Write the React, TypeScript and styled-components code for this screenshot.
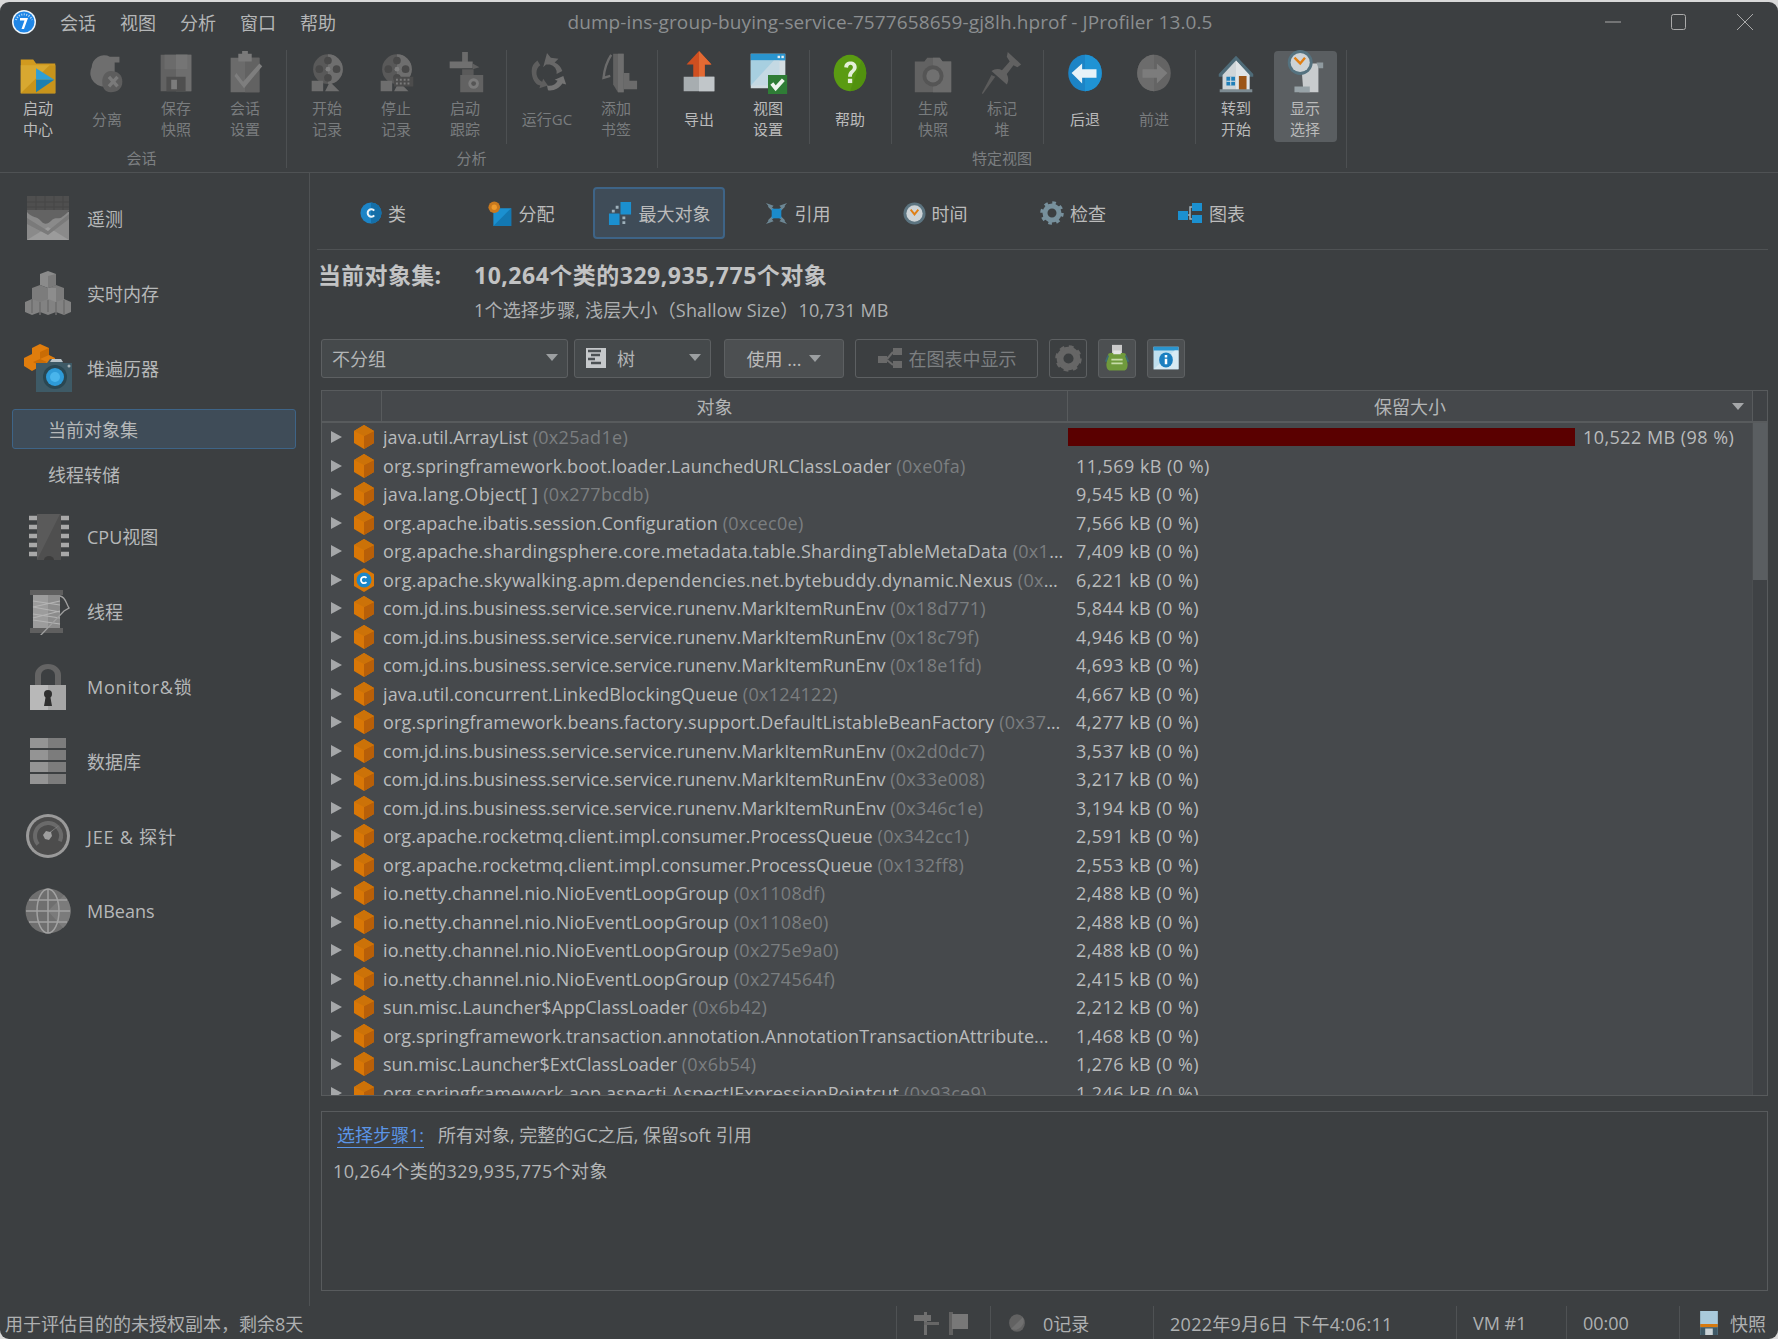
import React from "react";
import styled, { createGlobalStyle } from "styled-components";

const FONT = `"Open Sans", "Noto Sans CJK SC", sans-serif`;

const Global = createGlobalStyle`
  html, body { margin: 0; padding: 0; background: #d9d9d9; }
  body { font-family: ${FONT}; overflow: hidden; }
  * { box-sizing: border-box; }
`;

const Win = styled.div`
  width: 1778px; height: 1337px; margin-top: 2px; background: #3c3f41; color: #bbbbbb;
  border-radius: 9px; overflow: hidden; display: flex; flex-direction: column; font-size: 18px;
`;
const TitleBar = styled.div`
  height: 46px; flex: none; display: flex; align-items: center; padding: 0 0 6px 12px; position: relative;
`;
const Menu = styled.div`
  display: flex; gap: 24px; margin-left: 24px; color: #b4b6b7; font-size: 18px;
`;
const TitleText = styled.div`
  margin-left: 229px; color: #8b8e90; font-size: 19px; letter-spacing: .1px; white-space: nowrap; width: 650px; text-align: center;
`;
const WinBtns = styled.div`
  margin-left: auto; display: flex; width: 198px; height: 100%; align-items: center;
`;
const WinBtn = styled.div`
  width: 66px; display: flex; justify-content: center; align-items: center;
`;
const Ribbon = styled.div`
  height: 125px; flex: none; display: flex; padding: 2px 0 0 3.5px; border-bottom: 1px solid #4f5254;
`;
const RGroup = styled.div`
  display: flex; flex-direction: column;
`;
const RItems = styled.div`
  display: flex; height: 94px;
`;
const RLabel = styled.div`
  margin-top: 3px; height: 22px; line-height: 22px; text-align: center; font-size: 15px; color: #7c7f81;
`;
const RSep = styled.div<{ $h: number; $w?: number }>`
  width: ${p => p.$w ?? 13}px; flex: none; height: ${p => p.$h}px; display: flex; justify-content: center;
  &::before { content: ""; width: 1px; background: #4d5052; }
`;
const RItem = styled.div<{ $on?: boolean; $dim?: boolean }>`
  width: 69px; height: 94px; display: flex; flex-direction: column; align-items: center; position: relative;
  color: ${p => (p.$dim ? "#797c7e" : "#bbbbbb")};
  &::before {
    content: ""; display: ${p => (p.$on ? "block" : "none")}; position: absolute; left: 3px; right: 3px; top: 1px; bottom: 2px;
    background: #5a5e61; border-radius: 4px;
  }
`;
const RIcon = styled.div`
  height: 46px; display: flex; align-items: center; justify-content: center; flex: none; position: relative;
`;
const RText = styled.div`
  flex: 1; display: flex; flex-direction: column; justify-content: center; align-items: center; position: relative;
  font-size: 15px; line-height: 21px; padding-bottom: 2px; text-align: center;
`;
const Body = styled.div`
  flex: 1; display: flex; min-height: 0;
`;
const Side = styled.div`
  width: 310px; flex: none; border-right: 1px solid #4f5254; padding-top: 7.5px;
`;
const SideItem = styled.div<{ $ls?: number }>`
  height: 75px; display: flex; align-items: center; padding-left: 24px; gap: 15px; font-size: 18px; color: #b6b8b9;
  letter-spacing: ${p => p.$ls ?? 0}px;
`;
const SideSub = styled.div<{ $on?: boolean; $top?: number }>`
  height: 40px; margin: ${p => p.$top ?? 1.5}px 13px 4.5px 12px; padding-left: 35px; display: flex; align-items: center; border-radius: 3px;
  border: 1px solid ${p => (p.$on ? "#3e6487" : "transparent")};
  background: ${p => (p.$on ? "#3f4c58" : "transparent")};
  color: #b6b8b9;
`;
const Main = styled.div`
  flex: 1; min-width: 0; display: flex; flex-direction: column; padding: 0 10px 16px 11px;
`;
const Tabs = styled.div`
  display: flex; gap: 6px; padding: 14px 0 10px 0; border-bottom: 1px solid #4f5254; margin-left: -4px; height: 77px; flex: none;
`;
const Tab = styled.div<{ $on?: boolean }>`
  width: 132px; height: 52px; display: flex; align-items: center; justify-content: center; gap: 6px; border-radius: 4px; font-size: 18px;
  border: 2px solid ${p => (p.$on ? "#3e6487" : "transparent")};
  background: ${p => (p.$on ? "#3f4c58" : "transparent")};
`;
const Summary = styled.div`
  display: grid; grid-template-columns: 156px 1fr; margin-left: -3px; height: 89px; flex: none; align-content: start;
`;
const SumHead = styled.div<{ $ls?: number }>`
  font-size: 23px; font-weight: 700; color: #c2c3c4; line-height: 32px; padding-top: 9px; height: 43px; white-space: nowrap;
  letter-spacing: ${p => p.$ls ?? 0}px;
`;
const SumSub = styled.div`
  grid-column: 2; font-size: 18px; letter-spacing: .17px; color: #aeb0b1; line-height: 26px; padding-top: 4px; height: 30px;
`;
const Tools = styled.div`
  display: flex; height: 39px; flex: none; gap: 11px;
`;
const Combo = styled.div<{ $w: number; $mr: number }>`
  width: ${p => p.$w}px; height: 39px; margin-right: ${p => p.$mr}px; background: #45494b; border: 1px solid #5d6062; border-radius: 3px; display: flex; align-items: center; padding: 0 9px 2px 10px; gap: 10px;
  color: #b3b5b6;
`;
const Caret = styled.span<{ $ml?: string }>`
  margin-left: ${p => p.$ml ?? "auto"}; width: 0; height: 0; border-left: 6.5px solid transparent; border-right: 6.5px solid transparent; border-top: 7px solid #9c9fa1;
`;
const Btn = styled.div<{ $w: number; $off?: boolean }>`
  width: ${p => p.$w}px; height: 39px; flex: none; border: 1px solid #5d6062; border-radius: 3px; display: flex; align-items: center; justify-content: center; gap: 6px;
  background: ${p => (p.$off ? "transparent" : "#4c4f51")};
  color: ${p => (p.$off ? "#7c7f81" : "#bbbbbb")};
  padding-bottom: 1px;
`;
const TableBox = styled.div`
  margin-top: 12px; height: 706px; flex: none; border: 1px solid #585b5d; background: #46494c; display: flex; flex-direction: column; overflow: hidden; position: relative;
`;
const THead = styled.div`
  height: 32px; flex: none; display: flex; border-bottom: 2px solid #585b5d; background: #45484b;
`;
const Th = styled.div<{ $w?: number; $pr?: number }>`
  ${p => (p.$w ? `width:${p.$w}px;flex:none;` : "flex:1;")}
  padding-right: ${p => p.$pr ?? 0}px;
  border-right: 1px solid #585b5d; display: flex; align-items: center; justify-content: center; position: relative; color: #b3b5b6;
`;
const ThCorner = styled.div`
  flex: 1; background: #3f4245;
`;
const ThCaret = styled.span`
  position: absolute; right: 8px; top: 12px; width: 0; height: 0; border-left: 6.5px solid transparent; border-right: 6.5px solid transparent; border-top: 7px solid #a5a7a9;
`;
const TBody = styled.div`
  flex: 1; display: flex; min-height: 0; overflow: hidden;
`;
const Rows = styled.div`
  flex: 1; min-width: 0;
`;
const Row = styled.div`
  height: 28.5px; display: flex; align-items: center; padding-left: 9px;
`;
const Arrow = styled.span`
  width: 0; height: 0; flex: none; border-top: 6.5px solid transparent; border-bottom: 6.5px solid transparent; border-left: 11px solid #a5a7a9;
`;
const NameCell = styled.div`
  width: 720px; flex: none; padding: 0 3px 0 6px; margin-left: 5px; display: flex; align-items: center; gap: 8px; min-width: 0;
  svg { flex: none; }
`;
const NameText = styled.span<{ $ls: number }>`
  flex: 1; min-width: 0; white-space: nowrap; overflow: hidden; text-overflow: ellipsis; color: #b9bbbc; letter-spacing: ${p => p.$ls}px;
`;
const Hex = styled.span`
  color: #7b7e80; letter-spacing: .3px;
`;
const ValCell = styled.div`
  flex: 1; display: flex; align-items: center; color: #b9bbbc; padding-left: 1px; gap: 8px; white-space: nowrap; letter-spacing: .45px;
`;
const ValText = styled.span`
  padding-left: 8px;
`;
const Bar = styled.div`
  height: 18px; background: #5a0000;
`;
const Scroll = styled.div`
  width: 15px; flex: none; background: #3f4245; border-left: 1px solid #4b4e50;
`;
const Thumb = styled.div`
  height: 157px; background: #5a5e61;
`;
const Detail = styled.div`
  margin-top: 15px; height: 180px; flex: none; border: 1px solid #585b5d; padding: 10px 11px; color: #b3b5b6;
`;
const DLine = styled.div<{ $ls?: number }>`
  line-height: 26px; height: 36px; display: flex; gap: 14px; letter-spacing: ${p => p.$ls ?? 0}px;
`;
const DLink = styled.span`
  color: #5b95e6; border-bottom: 1px solid #5b95e6; height: 26px; margin-left: 4px;
`;
const Status = styled.div`
  height: 33px; flex: none; display: flex; align-items: center; color: #aeb0b1; font-size: 18px; position: relative;
`;
const StatusText = styled.div`
  padding-left: 5px; width: 896px; flex: none; color: #aeb0b1;
`;
const SCell = styled.div<{ $w: number; $g?: number; $ls?: number }>`
  width: ${p => p.$w}px; flex: none; height: 33px; border-left: 1px solid #4f5254; display: flex; align-items: center; padding-left: 16px; gap: ${p => p.$g ?? 16}px; white-space: nowrap;
  letter-spacing: ${p => p.$ls ?? 0}px;
`;

type P = { s?: number; v?: number };
const Svg = ({ s = 46, v = 48, children }: P & { children: React.ReactNode }) => (
  <svg width={s} height={s} viewBox={`0 0 ${v} ${v}`}>{children}</svg>
);

const G = { a: "#6e6e6e", b: "#595959", c: "#808080", d: "#494949" };

const reel = (
  <>
    <circle cx="25" cy="20" r="15.5" fill={G.b} />
    <path d="M25 4.5a15.5 15.5 0 0 1 0 31z" fill={G.a} />
    <circle cx="25" cy="11" r="4" fill={G.d} /><circle cx="25" cy="29" r="4" fill={G.d} />
    <circle cx="16" cy="20" r="4" fill={G.d} /><circle cx="34" cy="20" r="4" fill={G.d} />
    <circle cx="25" cy="20" r="2.5" fill={G.c} />
    <path d="M8 32h12v11H8zM22 43l5-10 10 10z" fill={G.a} />
  </>
);

const I: Record<string, React.ReactNode> = {
  folder: <Svg><path d="M6 10h13l3 4h20v31H6z" fill="#d19a1f" /><path d="M6 16h36v29H6z" fill="#d8a830" /><path d="M6 45l30-29h6v29z" fill="#c8941c" /><path d="M22 19l19 12H22z" fill="#2e9fd6" /><path d="M22 31h19L22 44z" fill="#1c7fb0" /></Svg>,
  detach: <Svg><path d="M8 18a13 13 0 0 1 19-11h10v6h-5v14l-6 10a14 14 0 0 1-18-19z" fill={G.a} /><path d="M28 22c7 0 12 4 12 11s-5 11-12 11-9-6-9-11 3-11 9-11z" fill="#5d5d5d" /><path d="M26 28l9 10M35 28l-9 10" stroke="#7a7a7a" strokeWidth="3.5" /></Svg>,
  floppy: <Svg><path d="M8 5h32v38H8z" fill="#626262" /><path d="M24 5h16v38H24z" fill="#6e6e6e" /><path d="M12 5h24v15H12z" fill="#6b6b6b" /><path d="M24 5h12v15H24z" fill="#757575" /><path d="M14 28h20v15H14z" fill="#4f4f4f" /><path d="M19 31h6v10h-6z" fill="#7c7c7c" /></Svg>,
  clip: <Svg><path d="M9 8h30v36H9z" fill="#6b6b6b" /><path d="M24 8h15v36H24z" fill="#626262" /><path d="M17 4h14v8H17z" fill="#7a7a7a" /><path d="M21 1h6v4h-6z" fill="#7a7a7a" /><path d="M15 24l7 9 17-19 3 3-19 23-10-13z" fill="#7e7e7e" /></Svg>,
  reelStart: <Svg>{reel}</Svg>,
  reelStop: <Svg>{reel}<path d="M22 28h20v10H22z" fill="#4c4c4c" /><path d="M24 31h16M24 35h16" stroke="#7a7a7a" strokeWidth="2" strokeDasharray="2 2" /></Svg>,
  trace: <Svg><path d="M21 2h6v12h-6z" fill="#6b6b6b" /><path d="M8 12h24v7H8z" fill="#707070" /><path d="M32 14l7 4-7 2z" fill="#5f5f5f" /><path d="M21 20h12v6H21z" fill="#5a5a5a" /><path d="M19 26h24v18H19z" fill="#626262" /><circle cx="33" cy="35" r="5.5" fill="#7b7b7b" /><circle cx="33" cy="35" r="2.5" fill="#555" /></Svg>,
  gc: <Svg><path d="M24 3l4 5 8 1-4 4a14 14 0 0 1 8 9l-6 3a9 9 0 0 0-7-10h-4l-3 3z" fill="#686868" /><path d="M8 22c0-5 2-8 6-11l3 5c-3 2-4 5-4 8 0 4 3 8 6 9l1-3 5 7-9 3 1-3C12 37 8 30 8 22z" fill="#5e5e5e" /><path d="M41 27l3 9-4-1c-3 5-9 8-15 7l-1-5c5 1 9-1 11-5l-3-1z" fill="#747474" /></Svg>,
  bookmark: <Svg><path d="M21 4h11v40h-6l-5-8z" fill="#626262" /><path d="M26 4h6v40h-6z" fill="#6e6e6e" /><path d="M32 24h6v8h8v9H32z" fill="#6b6b6b" /><path d="M19 5c-4 6-7 14-8 24l7-2" stroke="#6b6b6b" strokeWidth="2.5" fill="none" /></Svg>,
  exportI: <Svg><path d="M24 1l13 14h-7v15H18V15h-7z" fill="#cf4f20" /><path d="M24 1l13 14h-7v15h-6z" fill="#e36a33" /><path d="M8 28h32v15H8z" fill="#a7adb0" /><path d="M24 28h16v15H24z" fill="#c1c6c9" /></Svg>,
  viewset: <Svg><path d="M6 4h36v36H6z" fill="#cfdbe0" /><path d="M6 4h36v7H6z" fill="#2a95cf" /><path d="M6 11h30v26H6z" fill="#a7cfe0" /><path d="M6 37l24-26h12v29z" fill="#d7e0e4" opacity=".6" /><rect x="34" y="6" width="2.5" height="2.5" fill="#e8eef0" /><rect x="38" y="6" width="2.5" height="2.5" fill="#e8eef0" /><path d="M24 26h20v20H24z" fill="#2f7d36" /><path d="M28 35l4 5 8-9" stroke="#eef5ee" strokeWidth="4" fill="none" /></Svg>,
  help: <Svg><ellipse cx="24" cy="24" rx="17" ry="19" fill="#5a9b12" /><path d="M24 43c9 0 17-9 17-19 0-5-2-9-5-13z" fill="#4b8a0c" opacity=".6" /><path d="M18 18c0-4 3-6 6.500-6s6.500 2 6.500 6c0 5-5 5-5 10h-4c0-7 5-6.500 5-10 0-1.500-1-2.500-2.500-2.500S22 17 22 18.500z" fill="#e4efd8" /><rect x="21.800" y="30" width="4.500" height="4.500" fill="#e4efd8" /></Svg>,
  camera: <Svg><path d="M5 12h10l3-4h13l3 4h9v32H5z" fill="#626262" /><path d="M24 8h7l3 4h9v32H24z" fill="#6c6c6c" /><circle cx="24" cy="27" r="11" fill="#555" /><circle cx="24" cy="27" r="7" fill="#707070" /></Svg>,
  pin: <Svg><path d="M30 2l14 13-4 3-4-2-7 9c2 4 2 8 0 11L13 22c3-2 7-3 11-1l8-9-3-5z" fill="#616161" /><path d="M17 28L4 46l-1-1 10-19z" fill="#5b5b5b" /></Svg>,
  back: <Svg><ellipse cx="24" cy="24" rx="17.500" ry="19" fill="#1c84c6" /><path d="M24 5a17.500 19 0 0 1 0 38z" fill="#1f93d4" /><path d="M10 24l11-10v6h15v9H21v6z" fill="#e6f2f8" /></Svg>,
  fwd: <Svg><ellipse cx="24" cy="24" rx="17.500" ry="19" fill="#646464" /><path d="M24 5a17.500 19 0 0 0 0 38z" fill="#6c6c6c" /><path d="M38 24L27 14v6H12v9h15v6z" fill="#7c7c7c" /></Svg>,
  house: <Svg><path d="M24 6L6 25v3h4v14h28V28h4v-3z" fill="#4e6b78" /><path d="M24 11L10 26v16h28V26z" fill="#cfd5d8" /><path d="M24 11l14 15v16H24z" fill="#e0e4e6" /><path d="M14 28h9v9h-9z" fill="#1f7eb8" /><path d="M18 28h1v9h-1zM14 32h9v1h-9z" fill="#e0e4e6" /><path d="M27 27h8v15h-8z" fill="#9c5516" /><path d="M7 41h34v3H7z" fill="#7d8b92" /></Svg>,
  clockScroll: <Svg><path d="M20 14h22v4h-4v26H18v-4h4z" fill="#c9ccce" /><path d="M36 13h7v6h-5z" fill="#8f9a9f" /><path d="M13 38h16v6H13z" fill="#98a3a8" /><circle cx="19" cy="13" r="13" fill="#55727f" /><circle cx="19" cy="13" r="10" fill="#cdd3d6" /><path d="M13 8l6 6 5-6" stroke="#e07f14" strokeWidth="2.500" fill="none" /></Svg>,
  tele: <Svg s={48}><path d="M3 2h42v44H3z" fill="#8a8a8a" /><path d="M3 2h42v16H3z" fill="#4f4f4f" /><path d="M3 18c5 6 10 4 14 9 3 4 7 3 10 0 4-5 8-1 11-4 3-2 5-4 7-6v-1H3z" fill="#636363" /><path d="M3 46l21-13 21 13z" fill="#9b9b9b" /><path d="M3 24l21 13 21-17v5L24 41 3 30z" fill="#7a7a7a" /><path d="M12 2v14M21 2v14M30 2v14M39 2v14M3 8h42M3 13h42" stroke="#464646" strokeWidth="1" /></Svg>,
  mem: <Svg s={48}><path d="M24 2l8 3v11l-8 3-8-3V5z" fill="#8b8b8b" /><path d="M24 7l8-2v11l-8 3z" fill="#7a7a7a" /><path d="M16 16l8 3 8-3 8 3v12l-8 3-8-3-8 3-8-3V19z" fill="#7c7c7c" /><path d="M24 19v12l8 3V19z" fill="#8d8d8d" /><path d="M8 30l8 3 8-3 8 3 8-3 7 3v10l-7 3-8-3-8 3-8-3-8 3-7-3V33z" fill="#828282" /><path d="M16 33v13M32 33v13M24 31v12M40 31v15M8 30v14" stroke="#6d6d6d" strokeWidth="1.500" /></Svg>,
  heap: <Svg s={48}><path d="M16 0l9 4v7l6 3v8l-8 5-8-4-7 4-8-5v-8l8-4V4z" fill="#e07d0d" /><path d="M16 8l9-4v7l-9 4zM9 18l7-3 7 3-7 4-7-4z" fill="#c96c05" /><path d="M12 19h11l3-4h11l2 4h9v29H12z" fill="#3e5a66" /><path d="M28 15h9l2 3H26z" fill="#b9c3c8" /><circle cx="31" cy="33" r="12" fill="#2a4752" /><circle cx="31" cy="33" r="9" fill="#2e9bd8" /><circle cx="31" cy="33" r="5" fill="#49b5ec" /><circle cx="45" cy="22" r="1.500" fill="#a9b4b9" /></Svg>,
  cpu: <Svg s={48}><path d="M13 2h24v46H13z" fill="#5a5a5a" /><path d="M13 48L36 2h1v46z" fill="#4f4f4f" /><path d="M20 48a5 4 0 0 1 10 0z" fill="#3c3c3c" /><path d="M5 6h8M5 15h8M5 24h8M5 33h8M5 42h8M37 6h8M37 15h8M37 24h8M37 33h8M37 42h8" stroke="#a8a8a8" strokeWidth="4.500" /></Svg>,
  thread: <Svg s={48}><path d="M6 3h33v5H6zM6 41h33v5H6z" fill="#5f5f5f" /><path d="M9 8h27v33H9z" fill="#9c9c9c" /><path d="M24 8h12v33H24z" fill="#8c8c8c" /><path d="M9 14l27 4M9 20l27 5M9 27l27 4M9 33l27 4M9 20l27-6M9 31l27-7" stroke="#b4b4b4" strokeWidth="1.200" /><path d="M36 9c6 1 6 8 9 12l-5 3-25 26" stroke="#a0a0a0" strokeWidth="1.300" fill="none" /></Svg>,
  lock: <Svg s={48}><path d="M11 24V13a13 11 0 0 1 26 0v11h-6V13a7 6 0 0 0-14 0v11z" fill="#646464" /><path d="M6 23h36v25H6z" fill="#b8b8b8" /><path d="M24 23h18v25H24z" fill="#a6a6a6" /><circle cx="24" cy="32" r="4" fill="#2f2f2f" /><path d="M22 33h4l2 11h-8z" fill="#2f2f2f" /></Svg>,
  db: <Svg s={48}>{[1, 13, 25, 37].map(y => <g key={y}><path d={`M6 ${y}h36v10H6z`} fill="#949494" /><path d={`M24 ${y}h18v10H24z`} fill="#7c7c7c" /></g>)}</Svg>,
  jee: <Svg s={48}><circle cx="24" cy="24" r="22" fill="#9a9a9a" /><circle cx="24" cy="24" r="19" fill="#4c4c4c" /><circle cx="24" cy="24" r="13" fill="none" stroke="#6a6a6a" strokeWidth="4" strokeDasharray="55 30" transform="rotate(140 24 24)" /><path d="M37 12L26 20l-4-1-3 4 2 4 4 1 3-4-1-4z" fill="#9e9e9e" /></Svg>,
  globe: <Svg s={48}><circle cx="24" cy="24" r="22.500" fill="#6f6f6f" /><path d="M24 24l16-16a22.500 22.500 0 0 1-1 33z" fill="#7b7b7b" /><g stroke="#a2a2a2" strokeWidth="1.500" fill="none"><path d="M2 24h44M24 2v44M5 13h38M5 35h38" /><ellipse cx="24" cy="24" rx="11" ry="22" /></g></Svg>,
  tabC: <Svg s={22} v={24}><circle cx="12" cy="12" r="11.500" fill="#1c84c6" /><path d="M12 .5a11.500 11.500 0 0 1 0 23z" fill="#156fa8" /><path d="M15.500 9.500A4 4 0 1 0 15.500 14.500" stroke="#eaf4fa" strokeWidth="2.200" fill="none" /></Svg>,
  tabAlloc: <Svg s={25} v={28}><path d="M6 8h20v20H6z" fill="#1b90d0" /><path d="M6 28L26 8v20z" fill="#1378b2" /><circle cx="7" cy="7" r="6.500" fill="#c9791e" /><circle cx="7" cy="7" r="3" fill="#ee9a2c" /></Svg>,
  tabBig: <Svg s={25} v={26}><path d="M13 1h11v13H13zM1 13h11v12H1z" fill="#1b90d0" /><path d="M8 5h3v3H8zM4 9h3v3H4zM15 16h3v3h-3zM15 21h3v3h-3z" fill="#9fb1bb" /></Svg>,
  tabRef: <Svg s={25} v={26}><path d="M2 2l8 3-3 3zM24 2l-8 3 3 3zM2 24l8-3-3-3zM24 24l-8-3 3-3z" fill="#6d8794" /><path d="M5 5l16 16M21 5L5 21" stroke="#6d8794" strokeWidth="2.500" /><rect x="8" y="8" width="10" height="10" fill="#1b8bcb" /></Svg>,
  tabClock: <Svg s={23} v={24}><circle cx="12" cy="12" r="11.500" fill="#5c7480" /><circle cx="12" cy="12" r="8.500" fill="#cdd3d6" /><path d="M8 8l4 5 4-5" stroke="#e07f14" strokeWidth="2" fill="none" /></Svg>,
  tabGear: <Svg s={24} v={24}><circle cx="12" cy="12" r="7" fill="none" stroke="#77909c" strokeWidth="5" /><circle cx="12" cy="12" r="10" fill="none" stroke="#77909c" strokeWidth="3.500" strokeDasharray="3.500 4.350" /></Svg>,
  tabGraph: <Svg s={26} v={26}><path d="M1 11h10v9H1z" fill="#1b90d0" /><path d="M15 3h10v8H15zM15 15h10v8H15z" fill="#1b90d0" /><path d="M11 15h2V7h2M13 15v4h2" stroke="#9fb1bb" strokeWidth="1.500" fill="none" /></Svg>,
  tree: <Svg s={22} v={22}><path d="M1 1h20v20H1z" fill="#c6c9cb" /><path d="M3 4h13M6 8h9M3 12h7M6 16h10" stroke="#4c5154" strokeWidth="2.300" /></Svg>,
  graphBtn: <Svg s={26} v={26}><path d="M1 11h9v7H1zM16 3h9v7h-9zM16 16h9v7h-9z" fill="#6a6a6a" /><path d="M10 14l6-7M10 15l6 5" stroke="#6a6a6a" strokeWidth="2" /></Svg>,
  gearBtn: <Svg s={27}><circle cx="24" cy="24" r="15" fill="none" stroke="#666" strokeWidth="12" /><circle cx="24" cy="24" r="20" fill="none" stroke="#666" strokeWidth="7" strokeDasharray="8 7.700" /></Svg>,
  printer: <Svg s={30}><path d="M16 3h16v16H16z" fill="#c9c9c9" /><path d="M10 18c0-2 4-2 5-2h18c1 0 5 0 5 2l3 16c0 6-2 10-6 10H13c-4 0-6-4-6-10z" fill="#6f9a3c" /><path d="M15 25h18v3H15zM15 31h18v3H15z" fill="#c6dba8" /><path d="M18 12h12v6H18z" fill="#e4e4e4" /><path d="M10 20l-4 10M38 20l4 10" stroke="#3e6a73" strokeWidth="3" /></Svg>,
  infoWin: <Svg s={30}><path d="M4 6h40v36H4z" fill="#bfdfee" /><path d="M4 6h40v6H4z" fill="#2a95cf" /><path d="M4 42L38 12h6v30z" fill="#d7eaf3" /><ellipse cx="24" cy="27" rx="11" ry="12" fill="#1a7fc0" /><path d="M22 19h4v4h-4zM22 25h4v9h-4z" fill="#fff" /></Svg>,
  sign: <svg width="26" height="24" viewBox="0 0 26 24"><path d="M11 1h3v23h-3z" fill="#6f6f6f" /><path d="M1 4h17v6H1z" fill="#707070" /><path d="M11 11h15v3H11z" fill="#666" /></svg>,
  flag: <svg width="20" height="24" viewBox="0 0 20 24"><path d="M0 1h4v23H0z" fill="#626262" /><path d="M3 3h16v15H3z" fill="#787878" /></svg>,
  dot: <Svg s={20}><ellipse cx="24" cy="24" rx="19" ry="21" fill="#626262" /><path d="M10 38L38 10a21 21 0 0 1-28 28z" fill="#707070" /></Svg>,
  floppyC: <Svg s={26}><path d="M8 2h32v44H8z" fill="#8fb4c7" /><path d="M8 26h32v6H8z" fill="#d67a10" /><path d="M8 32h32v14H8z" fill="#3f5966" /><path d="M17 34h14v12H17z" fill="#c9d2d6" /><path d="M8 2h32v24H8z" fill="#a9cadb" /></Svg>,
  logo: <svg width="24" height="24" viewBox="0 0 24 24"><circle cx="12" cy="12" r="12" fill="#eef5fa" /><circle cx="12" cy="12" r="10.500" fill="#1f86e6" /><path d="M4 10a8.500 8.500 0 0 1 16 0" stroke="#bcdcf7" strokeWidth="2" strokeDasharray="1 1.500" fill="none" /><path d="M8 8h8l-4 11h-2.500l3-8.500H8z" fill="#fff" /></svg>,
  cube: <svg width="22" height="24" viewBox="0 0 22 24"><path d="M11 0l10 6v12l-10 6-10-6V6z" fill="#d97706" /><path d="M11 11l10-5v12l-10 6z" fill="#b85f08" /><path d="M1 6l10-6 10 6-10 5z" fill="#cc7208" /></svg>,
  ccube: <svg width="22" height="24" viewBox="0 0 22 24"><path d="M11 0l10 6v12l-10 6-10-6V6z" fill="#d97706" /><circle cx="11" cy="12" r="7.500" fill="#1b87c9" /><path d="M13.500 9.800a3.200 3.200 0 1 0 0 4.400" stroke="#fff" strokeWidth="1.800" fill="none" /></svg>,
};

type RI = { i: string; t: string[]; dim?: boolean; on?: boolean };
const Item = ({ i, t, dim, on }: RI) => (
  <RItem $dim={dim} $on={on}>
    <RIcon>{I[i]}</RIcon>
    <RText>{t.map(x => <div key={x}>{x}</div>)}</RText>
  </RItem>
);

const JD = "com.jd.ins.business.service.service.runenv.MarkItemRunEnv";
const MQ = "org.apache.rocketmq.client.impl.consumer.ProcessQueue";
const NY = "io.netty.channel.nio.NioEventLoopGroup";

const rows: [string, string, string, number, boolean?][] = [
  ["java.util.ArrayList", "(0x25ad1e)", "10,522 MB (98 %)", 0.07],
  ["org.springframework.boot.loader.LaunchedURLClassLoader", "(0xe0fa)", "11,569 kB (0 %)", 0.13],
  ["java.lang.Object[ ]", "(0x277bcdb)", "9,545 kB (0 %)", 0.3],
  ["org.apache.ibatis.session.Configuration", "(0xcec0e)", "7,566 kB (0 %)", 0.13],
  ["org.apache.shardingsphere.core.metadata.table.ShardingTableMetaData", "(0x1d2a4f)", "7,409 kB (0 %)", 0.21],
  ["org.apache.skywalking.apm.dependencies.net.bytebuddy.dynamic.Nexus", "(0x6e21c)", "6,221 kB (0 %)", 0.26, true],
  [JD, "(0x18d771)", "5,844 kB (0 %)", -0.01],
  [JD, "(0x18c79f)", "4,946 kB (0 %)", -0.01],
  [JD, "(0x18e1fd)", "4,693 kB (0 %)", -0.01],
  ["java.util.concurrent.LinkedBlockingQueue", "(0x124122)", "4,667 kB (0 %)", 0.15],
  ["org.springframework.beans.factory.support.DefaultListableBeanFactory", "(0x37a1c)", "4,277 kB (0 %)", 0.15],
  [JD, "(0x2d0dc7)", "3,537 kB (0 %)", -0.01],
  [JD, "(0x33e008)", "3,217 kB (0 %)", -0.01],
  [JD, "(0x346c1e)", "3,194 kB (0 %)", -0.01],
  [MQ, "(0x342cc1)", "2,591 kB (0 %)", 0.09],
  [MQ, "(0x132ff8)", "2,553 kB (0 %)", 0.09],
  [NY, "(0x1108df)", "2,488 kB (0 %)", 0.13],
  [NY, "(0x1108e0)", "2,488 kB (0 %)", 0.13],
  [NY, "(0x275e9a0)", "2,488 kB (0 %)", 0.13],
  [NY, "(0x274564f)", "2,415 kB (0 %)", 0.13],
  ["sun.misc.Launcher$AppClassLoader", "(0x6b42)", "2,212 kB (0 %)", 0.07],
  ["org.springframework.transaction.annotation.AnnotationTransactionAttribute...", "", "1,468 kB (0 %)", 0.09],
  ["sun.misc.Launcher$ExtClassLoader", "(0x6b54)", "1,276 kB (0 %)", -0.03],
  ["org.springframework.aop.aspectj.AspectJExpressionPointcut", "(0x93ce9)", "1,246 kB (0 %)", 0.21],
];

const Group = ({ label, children }: { label: string; children: React.ReactNode }) => (
  <RGroup>
    <RItems>{children}</RItems>
    <RLabel>{label}</RLabel>
  </RGroup>
);

export default function App() {
  return (
    <Win>
      <Global />
      <TitleBar>
        {I.logo}
        <Menu>{["会话", "视图", "分析", "窗口", "帮助"].map(m => <span key={m}>{m}</span>)}</Menu>
        <TitleText>dump-ins-group-buying-service-7577658659-gj8lh.hprof - JProfiler 13.0.5</TitleText>
        <WinBtns>
          <WinBtn><svg width="16" height="16"><path d="M0 8h16" stroke="#aaa" strokeWidth="1" /></svg></WinBtn>
          <WinBtn><svg width="16" height="16"><rect x=".5" y=".5" width="14" height="15" rx="2" fill="none" stroke="#aaa" /></svg></WinBtn>
          <WinBtn><svg width="18" height="18"><path d="M1 1l16 16M17 1L1 17" stroke="#aaa" strokeWidth="1" /></svg></WinBtn>
        </WinBtns>
      </TitleBar>
      <Ribbon>
        <Group label="会话">
          <Item i="folder" t={["启动", "中心"]} />
          <Item i="detach" t={["分离"]} dim />
          <Item i="floppy" t={["保存", "快照"]} dim />
          <Item i="clip" t={["会话", "设置"]} dim />
        </Group>
        <RSep $h={118} />
        <Group label="分析">
          <Item i="reelStart" t={["开始", "记录"]} dim />
          <Item i="reelStop" t={["停止", "记录"]} dim />
          <Item i="trace" t={["启动", "跟踪"]} dim />
          <RSep $h={94} />
          <Item i="gc" t={["运行GC"]} dim />
          <Item i="bookmark" t={["添加", "书签"]} dim />
        </Group>
        <RSep $h={118} $w={14} />
        <Group label="特定视图">
          <Item i="exportI" t={["导出"]} />
          <Item i="viewset" t={["视图", "设置"]} />
          <RSep $h={94} />
          <Item i="help" t={["帮助"]} />
          <RSep $h={94} $w={14} />
          <Item i="camera" t={["生成", "快照"]} dim />
          <Item i="pin" t={["标记", "堆"]} dim />
          <RSep $h={94} $w={14} />
          <Item i="back" t={["后退"]} />
          <Item i="fwd" t={["前进"]} dim />
          <RSep $h={94} />
          <Item i="house" t={["转到", "开始"]} />
          <Item i="clockScroll" t={["显示", "选择"]} on />
        </Group>
        <RSep $h={118} />
      </Ribbon>
      <Body>
        <Side>
          <SideItem>{I.tele}<span>遥测</span></SideItem>
          <SideItem>{I.mem}<span>实时内存</span></SideItem>
          <SideItem>{I.heap}<span>堆遍历器</span></SideItem>
          <SideSub $on $top={3.5}>当前对象集</SideSub>
          <SideSub>线程转储</SideSub>
          <SideItem>{I.cpu}<span>CPU视图</span></SideItem>
          <SideItem>{I.thread}<span>线程</span></SideItem>
          <SideItem $ls={0.8}>{I.lock}<span>Monitor&amp;锁</span></SideItem>
          <SideItem>{I.db}<span>数据库</span></SideItem>
          <SideItem $ls={0.8}>{I.jee}<span>JEE &amp; 探针</span></SideItem>
          <SideItem>{I.globe}<span>MBeans</span></SideItem>
        </Side>
        <Main>
          <Tabs>
            <Tab>{I.tabC}<span>类</span></Tab>
            <Tab>{I.tabAlloc}<span>分配</span></Tab>
            <Tab $on>{I.tabBig}<span>最大对象</span></Tab>
            <Tab>{I.tabRef}<span>引用</span></Tab>
            <Tab>{I.tabClock}<span>时间</span></Tab>
            <Tab>{I.tabGear}<span>检查</span></Tab>
            <Tab>{I.tabGraph}<span>图表</span></Tab>
          </Tabs>
          <Summary>
            <SumHead $ls={0.3}>当前对象集:</SumHead>
            <SumHead $ls={0.5}>10,264个类的329,935,775个对象</SumHead>
            <SumSub>1个选择步骤, 浅层大小（Shallow Size）10,731 MB</SumSub>
          </Summary>
          <Tools>
            <Combo $w={247} $mr={-5}>不分组<Caret /></Combo>
            <Combo $w={137} $mr={2}>{I.tree}树<Caret /></Combo>
            <Btn $w={120}>使用 ...<Caret $ml="2px" /></Btn>
            <Btn $w={183} $off>{I.graphBtn}在图表中显示</Btn>
            <Btn $w={38} $off>{I.gearBtn}</Btn>
            <Btn $w={38}>{I.printer}</Btn>
            <Btn $w={38}>{I.infoWin}</Btn>
          </Tools>
          <TableBox>
            <THead>
              <Th $w={60} />
              <Th $w={686} $pr={20}>对象</Th>
              <Th $w={685}>保留大小<ThCaret /></Th>
              <ThCorner />
            </THead>
            <TBody>
              <Rows>
                {rows.map((r, n) => (
                  <Row key={n}>
                    <Arrow />
                    <NameCell>
                      {r[4] ? I.ccube : I.cube}
                      <NameText $ls={r[3]}>{r[0]} <Hex>{r[1]}</Hex></NameText>
                    </NameCell>
                    <ValCell>
                      {n === 0 ? <><Bar style={{ width: 507 }} /><span>{r[2]}</span></> : <ValText>{r[2]}</ValText>}
                    </ValCell>
                  </Row>
                ))}
              </Rows>
              <Scroll><Thumb /></Scroll>
            </TBody>
          </TableBox>
          <Detail>
            <DLine><DLink>选择步骤1:</DLink><span>所有对象, 完整的GC之后, 保留soft 引用</span></DLine>
            <DLine $ls={0.38}>10,264个类的329,935,775个对象</DLine>
          </Detail>
        </Main>
      </Body>
      <Status>
        <StatusText>用于评估目的的未授权副本，剩余8天</StatusText>
        <SCell $w={94} $g={10}>{I.sign}{I.flag}</SCell>
        <SCell $w={163}>{I.dot}<span>0记录</span></SCell>
        <SCell $w={303} $ls={0.28}>2022年9月6日 下午4:06:11</SCell>
        <SCell $w={110}>VM #1</SCell>
        <SCell $w={113}>00:00</SCell>
        <SCell $w={99} $g={8}>{I.floppyC}<span>快照</span></SCell>
      </Status>
    </Win>
  );
}
